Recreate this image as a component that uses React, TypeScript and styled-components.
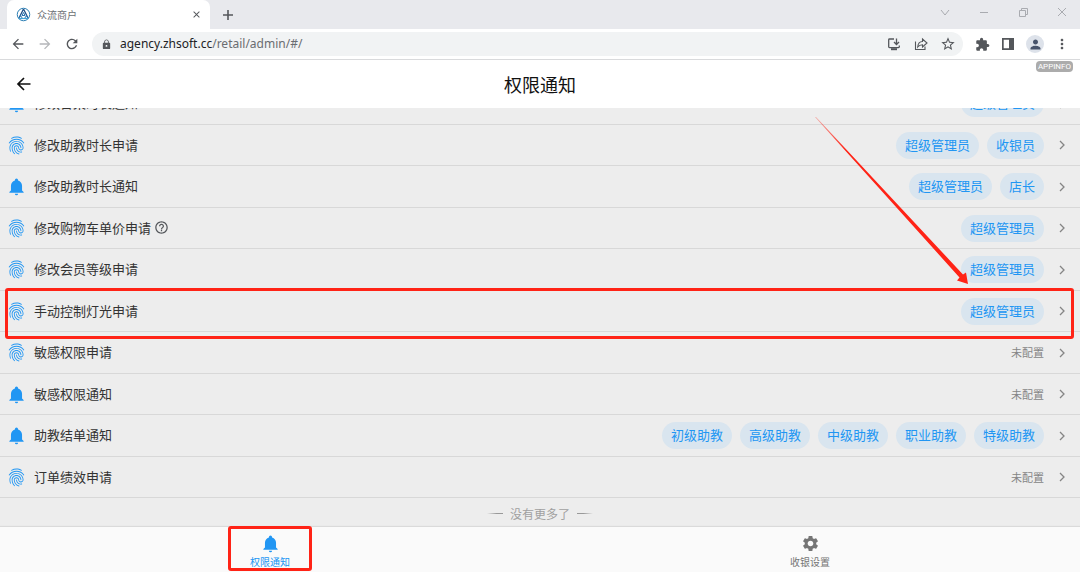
import React from "react";
import styled, { createGlobalStyle } from "styled-components";
import { IoFingerPrintOutline } from "react-icons/io5";
import {
  MdArrowBack,
  MdArrowForward,
  MdClose,
  MdExtension,
  MdHelpOutline,
  MdLock,
  MdMoreVert,
  MdPerson,
  MdRefresh,
  MdSettings,
  MdStarBorder,
} from "react-icons/md";

const BLUE = "#2196f3";
const MARK = "#ff2316";

const GlobalStyle = createGlobalStyle`
  * { box-sizing: border-box; }
  body {
    margin: 0;
    font-family: "Noto Sans CJK SC", sans-serif;
    color: #333;
    background: #ededed;
  }
  button {
    margin: 0;
    padding: 0;
    border: 0;
    background: none;
    font: inherit;
    color: inherit;
    cursor: pointer;
  }
`;

const Window = styled.div`
  display: flex;
  flex-direction: column;
  height: 100vh;
  overflow: hidden;
`;

/* Browser chrome */

const TabStrip = styled.div`
  display: flex;
  flex: none;
  align-items: stretch;
  height: 29px;
  padding-left: 7px;
  background: #e8e9ed;
`;

const Tab = styled.div`
  display: flex;
  align-items: center;
  gap: 6px;
  width: 203px;
  padding: 0 8px 0 9px;
  border-radius: 7px 7px 0 0;
  background: #fff;
  color: #6b6e72;
`;

const TabTitle = styled.span`
  flex: 1;
  font-size: 10px;
  line-height: 14px;
`;

const IconButton = styled.button<{ $size?: number; $color?: string }>`
  display: inline-flex;
  flex: none;
  align-items: center;
  justify-content: center;
  width: ${(p) => p.$size ?? 16}px;
  height: ${(p) => p.$size ?? 16}px;
  && {
    color: ${(p) => p.$color ?? "#54575b"};
  }
`;

const NewTab = styled.div`
  display: flex;
  flex: 1;
  align-items: center;
  padding-left: 10px;
`;

const WindowControls = styled.div`
  display: flex;
  align-items: center;
  gap: 23px;
  padding: 0 10px 5px 0;
`;

const Toolbar = styled.div`
  display: flex;
  flex: none;
  align-items: center;
  height: 31px;
  padding: 0 10px;
  border-bottom: 1px solid #d9dadc;
  background: #fff;
`;

const NavButtons = styled.div`
  display: flex;
  gap: 11px;
  padding-right: 12px;
`;

const AddressBar = styled.div`
  display: flex;
  flex: 1;
  align-items: center;
  gap: 8px;
  height: 24px;
  padding: 0 7px 0 9px;
  border-radius: 12px;
  background: #f1f3f4;
`;

const Address = styled.span`
  flex: 1;
  font-family: "Noto Sans", sans-serif;
  font-size: 12px;
  line-height: 18px;
  color: #6a6d71;
`;

const Host = styled.span`
  color: #202124;
`;

const ActionGroup = styled.div`
  display: flex;
  align-items: center;
  gap: 11px;
`;

const Extensions = styled(ActionGroup)`
  gap: 10px;
  padding-left: 11px;
`;

const Avatar = styled.button`
  display: flex;
  align-items: center;
  justify-content: center;
  width: 18px;
  height: 18px;
  border-radius: 50%;
  && {
    background: #dde2ea;
    color: #47536b;
  }
`;

/* Page */

const Header = styled.header`
  position: relative;
  display: grid;
  flex: none;
  grid-template-columns: 1fr auto 1fr;
  align-items: center;
  height: 48px;
  padding: 0 16px;
  background: #fff;
`;

const Title = styled.h1`
  margin: 0;
  font-size: 18px;
  font-weight: 400;
  line-height: 26px;
  color: #111;
`;

const AppInfo = styled.span`
  position: absolute;
  top: 1px;
  right: 7px;
  padding: 0 2px;
  border-radius: 4px;
  background: #acacac;
  color: #fff;
  font-family: Roboto, sans-serif;
  font-size: 8px;
  line-height: 11px;
`;

const ScrollArea = styled.main`
  position: relative;
  display: flex;
  flex: 1;
  flex-direction: column;
  justify-content: flex-end;
  min-height: 0;
  overflow: hidden;
  background: #ededed;
`;

const List = styled.ul`
  flex: none;
  margin: 0;
  padding: 0;
  list-style: none;
`;

const Row = styled.li<{ $marked?: boolean }>`
  position: relative;
  display: flex;
  align-items: center;
  height: 41px;
  padding: 0 11px 0 7px;
  border-bottom: 1px solid #d8d8d8;

  &:nth-child(odd) {
    height: 42px;
  }

  &::after {
    content: ${(p) => (p.$marked ? '""' : "none")};
    position: absolute;
    inset: -3px 6px -8px 5px;
    border: 3px solid ${MARK};
    border-radius: 3px;
    pointer-events: none;
  }
`;

const RowIcon = styled.span`
  display: flex;
  justify-content: center;
  width: 19px;
  margin-right: 8px;
  color: ${BLUE};
`;

const RowLabel = styled.span`
  display: flex;
  flex: 1;
  align-items: center;
  gap: 3px;
  padding-bottom: 1px;
  font-size: 13px;
  line-height: 20px;
`;

const Chips = styled.span`
  display: flex;
  gap: 8px;
  margin-right: 11px;
`;

const Chip = styled.span`
  padding: 0 9px 2px;
  border-radius: 14px;
  background: #d9e5ef;
  color: ${BLUE};
  font-size: 13px;
  line-height: 25px;
`;

const Unset = styled.span`
  margin-right: 11px;
  padding-bottom: 1px;
  color: #858585;
  font-size: 11px;
  line-height: 16px;
`;

const EndNote = styled.p`
  display: flex;
  flex: none;
  align-items: center;
  justify-content: center;
  gap: 7px;
  height: 29px;
  margin: 0;
  padding-top: 2px;
  color: #a0a0a0;
  font-size: 12px;
  line-height: 18px;
`;

const Dash = styled.span<{ $flip?: boolean }>`
  width: 16px;
  height: 1px;
  background: linear-gradient(${(p) => (p.$flip ? "to left" : "to right")}, transparent, #999 60%);
`;

const Arrow = styled.svg`
  position: absolute;
  top: 8px;
  right: 110px;
  pointer-events: none;
`;

const BottomNav = styled.nav`
  display: grid;
  flex: none;
  grid-template-columns: 1fr 1fr;
  justify-items: center;
  height: 45px;
  background: #fafafa;
  box-shadow: 0 -1px 1px #dadada;
  z-index: 1;
`;

const NavItem = styled.button<{ $active?: boolean }>`
  position: relative;
  display: flex;
  flex-direction: column;
  align-items: center;
  justify-content: flex-start;
  gap: 1px;
  width: 84px;
  padding-top: 7px;
  && {
    color: ${(p) => (p.$active ? BLUE : "#757575")};
  }

  &::after {
    content: ${(p) => (p.$active ? '""' : "none")};
    position: absolute;
    inset: -1px 0 1px;
    border: 3px solid ${MARK};
    border-radius: 3px;
  }
`;

const NavLabel = styled.span`
  font-size: 10px;
  line-height: 16px;
`;

const Logo = () => (
  <svg width="15" height="15" viewBox="0 0 30 30" fill="none" strokeWidth="2">
    <circle cx="15" cy="15" r="12.5" stroke="#2c7fb5" />
    <path d="M15 4 6 22M15 4l9 18" stroke="#1f4e86" strokeWidth="2.6" />
    <path d="m15 11-3 6h6zM9 17l-3 6h7zM21 17l3 6h-7z" stroke="#2d74b0" />
    <path d="M5 23h20" stroke="#45a5d8" strokeWidth="2.4" />
  </svg>
);

const Bell = ({ size }: { size: number }) => (
  <svg width={size} height={size} viewBox="0 0 24 24" fill="currentColor">
    <path d="M21,19V20H3V19L5,17V11C5,7.9 7.03,5.17 10,4.29C10,4.19 10,4.1 10,4A2,2 0 0,1 12,2A2,2 0 0,1 14,4C14,4.1 14,4.19 14,4.29C16.97,5.17 19,7.9 19,11V17L21,19M14,21A2,2 0 0,1 12,23A2,2 0 0,1 10,21" />
  </svg>
);

const line = { fill: "none", stroke: "currentColor" } as const;

type Item = { kind: "apply" | "notice"; label: string; roles?: string[]; help?: boolean; marked?: boolean };

const ADMIN = "超级管理员";

const items: Item[] = [
  { kind: "notice", label: "修改台桌时长通知", roles: [ADMIN] },
  { kind: "apply", label: "修改助教时长申请", roles: [ADMIN, "收银员"] },
  { kind: "notice", label: "修改助教时长通知", roles: [ADMIN, "店长"] },
  { kind: "apply", label: "修改购物车单价申请", roles: [ADMIN], help: true },
  { kind: "apply", label: "修改会员等级申请", roles: [ADMIN] },
  { kind: "apply", label: "手动控制灯光申请", roles: [ADMIN], marked: true },
  { kind: "apply", label: "敏感权限申请" },
  { kind: "notice", label: "敏感权限通知" },
  {
    kind: "notice",
    label: "助教结单通知",
    roles: ["初级助教", "高级助教", "中级助教", "职业助教", "特级助教"],
  },
  { kind: "apply", label: "订单绩效申请" },
];

const PermissionRow = ({ item }: { item: Item }) => (
  <Row $marked={item.marked}>
    <RowIcon>{item.kind === "apply" ? <IoFingerPrintOutline size={19} /> : <Bell size={19} />}</RowIcon>
    <RowLabel>
      {item.label}
      {item.help && (
        <IconButton aria-label="帮助" $size={15}>
          <MdHelpOutline size={15} />
        </IconButton>
      )}
    </RowLabel>
    {item.roles ? (
      <Chips>
        {item.roles.map((role) => (
          <Chip key={role}>{role}</Chip>
        ))}
      </Chips>
    ) : (
      <Unset>未配置</Unset>
    )}
    <IconButton aria-label="查看" $size={14} $color="#858585">
      <svg width="14" height="14" viewBox="0 0 14 14" {...line} strokeWidth="1.3">
        <path d="m5 3 4 4-4 4" />
      </svg>
    </IconButton>
  </Row>
);

export default function App() {
  return (
    <Window>
      <GlobalStyle />
      <TabStrip>
        <Tab>
          <Logo />
          <TabTitle>众流商户</TabTitle>
          <IconButton aria-label="关闭标签页" $size={12}>
            <MdClose size={11} />
          </IconButton>
        </Tab>
        <NewTab>
          <IconButton aria-label="新标签页">
            <svg width="16" height="16" viewBox="0 0 16 16" {...line} strokeWidth="1.6">
              <path d="M8 3v10M3 8h10" />
            </svg>
          </IconButton>
        </NewTab>
        <WindowControls>
          <IconButton aria-label="搜索标签页" $color="#a9abb0">
            <svg width="16" height="16" viewBox="0 0 16 16" {...line}>
              <path d="m4 6 4 5 4-5" />
            </svg>
          </IconButton>
          <IconButton aria-label="最小化" $color="#a9abb0">
            <svg width="16" height="16" viewBox="0 0 16 16" {...line}>
              <path d="M4 8.500h8" />
            </svg>
          </IconButton>
          <IconButton aria-label="还原" $color="#a9abb0">
            <svg width="16" height="16" viewBox="0 0 16 16" {...line}>
              <path d="M4.500 6.500h6v6h-6zM6.500 6.500v-2h6v6h-2" />
            </svg>
          </IconButton>
          <IconButton aria-label="关闭" $color="#a9abb0">
            <svg width="16" height="16" viewBox="0 0 16 16" {...line}>
              <path d="m4 4 8 8M12 4l-8 8" />
            </svg>
          </IconButton>
        </WindowControls>
      </TabStrip>

      <Toolbar>
        <NavButtons>
          <IconButton aria-label="后退">
            <MdArrowBack size={16} />
          </IconButton>
          <IconButton aria-label="前进" $color="#b5b7ba">
            <MdArrowForward size={16} />
          </IconButton>
          <IconButton aria-label="重新加载">
            <MdRefresh size={18} />
          </IconButton>
        </NavButtons>
        <AddressBar>
          <MdLock size={11} color="#54575b" />
          <Address>
            <Host>agency.zhsoft.cc</Host>/retail/admin/#/
          </Address>
          <ActionGroup>
            <IconButton aria-label="安装应用">
              <svg width="16" height="16" viewBox="0 0 16 16" {...line} strokeWidth="1.3">
                <path d="M8 3H3.500Q2.700 3 2.700 3.800v7q0 .8.8.8h9q.8 0 .8-.8V9.500M10.500 2.500v5.500M8 6l2.500 2.500L13 6" />
                <path d="M5 13.200h6" strokeWidth="2" />
              </svg>
            </IconButton>
            <IconButton aria-label="分享">
              <svg width="16" height="16" viewBox="0 0 16 16" {...line} strokeWidth="1.100">
                <path d="M2.500 5.500v8h9.500v-3" />
                <path d="M9.500 3v2.500C6.500 5.500 5 7.500 4.700 11c1.300-1.700 2.700-2.300 4.800-2.300V11l4.500-4z" />
              </svg>
            </IconButton>
            <IconButton aria-label="收藏">
              <MdStarBorder size={16} />
            </IconButton>
          </ActionGroup>
        </AddressBar>
        <Extensions>
          <IconButton aria-label="扩展程序">
            <MdExtension size={15} />
          </IconButton>
          <IconButton aria-label="侧边栏">
            <svg width="16" height="16" viewBox="0 0 16 16" fill="currentColor">
              <path fillRule="evenodd" d="M2 2h12v12H2zM3.700 3.700v8.600h5.300V3.700z" />
            </svg>
          </IconButton>
          <Avatar aria-label="用户">
            <MdPerson size={15} />
          </Avatar>
          <IconButton aria-label="菜单">
            <MdMoreVert size={16} />
          </IconButton>
        </Extensions>
      </Toolbar>

      <Header>
        <IconButton aria-label="返回" $color="#111">
          <svg width="16" height="16" viewBox="0 0 16 16" {...line} strokeWidth="1.700">
            <path d="M14.500 8H2M8 2 2 8l6 6" />
          </svg>
        </IconButton>
        <Title>权限通知</Title>
        <AppInfo>APPINFO</AppInfo>
      </Header>

      <ScrollArea>
        <List>
          {items.map((item) => (
            <PermissionRow key={item.label} item={item} />
          ))}
        </List>
        <EndNote>
          <Dash />
          没有更多了
          <Dash $flip />
        </EndNote>
        <Arrow width="156" height="170" viewBox="0 0 156 170">
          <defs>
            <linearGradient id="fade" x1="0" y1="0" x2="1" y2="1">
              <stop offset="0" stopColor={MARK} stopOpacity="0.300" />
              <stop offset="0.200" stopColor={MARK} />
            </linearGradient>
          </defs>
          <path d="M1 1 2 1 149 158.500 152 156.500 154 168 143 164.500 145.500 161.500z" fill="url(#fade)" />
        </Arrow>
      </ScrollArea>

      <BottomNav>
        <NavItem $active>
          <Bell size={19} />
          <NavLabel>权限通知</NavLabel>
        </NavItem>
        <NavItem>
          <MdSettings size={19} />
          <NavLabel>收银设置</NavLabel>
        </NavItem>
      </BottomNav>
    </Window>
  );
}
